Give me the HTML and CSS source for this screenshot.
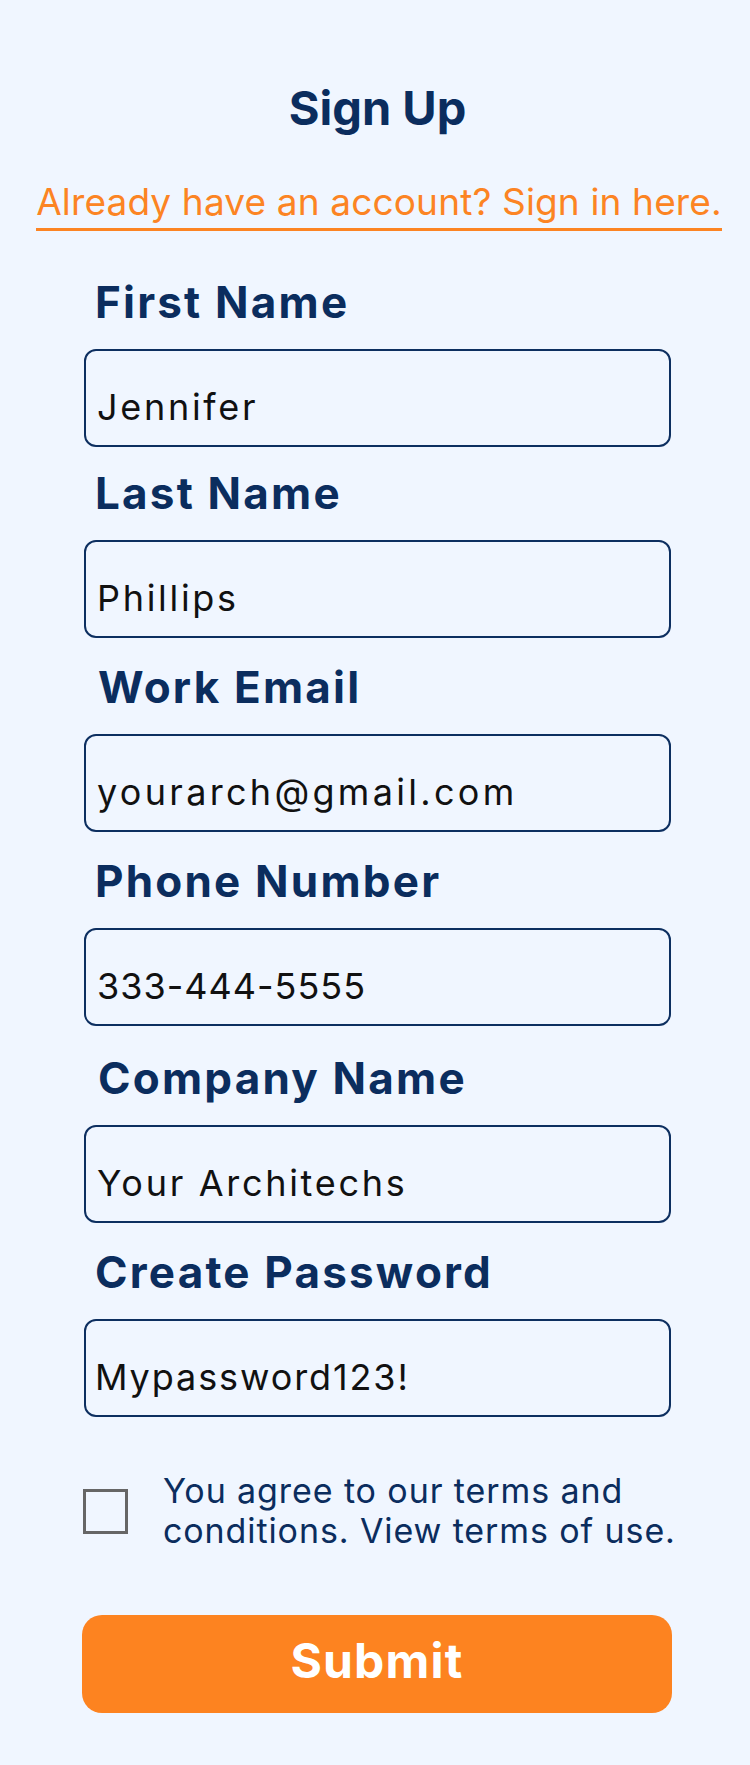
FILE: index.html
```html
<!DOCTYPE html>
<html lang="en">
<head>
<meta charset="utf-8">
<title>Sign Up</title>
<link rel="stylesheet" href="styles.css">
</head>
<body>
<main class="page">
  <h1 class="title">Sign Up</h1>
  <div class="signin-wrap">
    <a class="signin" href="#">Already have an account? Sign in here.</a>
  </div>
  <form class="form">
    <div class="field">
      <label class="label" for="first">First Name</label>
      <input class="input" id="first" type="text" value="Jennifer">
    </div>
    <div class="field field-up">
      <label class="label" for="last">Last Name</label>
      <input class="input" id="last" type="text" value="Phillips">
    </div>
    <div class="field">
      <label class="label label-shift" for="email">Work Email</label>
      <input class="input input-wide" id="email" type="text" value="yourarch@gmail.com">
    </div>
    <div class="field">
      <label class="label" for="phone">Phone Number</label>
      <input class="input input-digits" id="phone" type="text" value="333-444-5555">
    </div>
    <div class="field field-down">
      <label class="label label-shift" for="company">Company Name</label>
      <input class="input" id="company" type="text" value="Your Architechs">
    </div>
    <div class="field">
      <label class="label" for="password">Create Password</label>
      <input class="input input-narrow" id="password" type="text" value="Mypassword123!">
    </div>
    <label class="terms">
      <span class="checkbox"></span>
      <span class="terms-text">You agree to our terms and conditions. View terms of use.</span>
    </label>
    <button class="submit" type="button">Submit</button>
  </form>
</main>
</body>
</html>
```
FILE: styles.css
```css
* { box-sizing: border-box; }

html, body {
  margin: 0;
  background: #f0f6ff;
}

body {
  font-family: "Inter", "Liberation Sans", sans-serif;
  color: #0b2d5e;
}

.page {
  padding: 80px 0 52px;
  display: flex;
  flex-direction: column;
}

.title {
  margin: 0;
  font-size: 47px;
  line-height: 56px;
  font-weight: 700;
  text-align: center;
  color: #0b2d5e;
  padding-left: 5px;
}

.signin-wrap {
  margin-top: 44px;
  text-align: center;
  padding-left: 8px;
}

.signin {
  display: inline-block;
  font-size: 37px;
  line-height: 44px;
  font-weight: 400;
  letter-spacing: 0.15px;
  color: #fc8423;
  text-decoration: none;
  padding-bottom: 4px;
  border-bottom: 3px solid #fc8423;
}

.form {
  margin: 46px 79px 0 84px;
  display: flex;
  flex-direction: column;
  gap: 24px;
}

.field {
  display: flex;
  flex-direction: column;
  gap: 22px;
}

.field-up { margin-top: -3px; }
.field-down { margin-top: 3px; }

.label {
  display: block;
  padding-left: 11px;
  font-size: 44px;
  line-height: 50px;
  font-weight: 700;
  letter-spacing: 2.2px;
  color: #0b2d5e;
}

.label-shift { padding-left: 14px; }

.input {
  display: block;
  width: 100%;
  height: 98px;
  margin: 0;
  padding: 36px 10px 18px 11px;
  border: 2px solid #0d2f60;
  border-radius: 12px;
  background: transparent;
  font-family: "Inter", "Liberation Sans", sans-serif;
  font-size: 36px;
  line-height: 40px;
  font-weight: 400;
  letter-spacing: 2.7px;
  color: #111;
  outline: none;
}

.input-wide { letter-spacing: 3.3px; }
.input-digits { letter-spacing: 1px; }
.input-narrow { letter-spacing: 1.9px; padding-left: 9px; }

.terms {
  margin-top: 30px;
  margin-right: -30px;
  display: flex;
  align-items: center;
  gap: 35px;
}

.checkbox {
  flex: none;
  width: 45px;
  height: 45px;
  margin-left: -1px;
  border: 3px solid #666;
  background: transparent;
}

.terms-text {
  font-size: 34px;
  line-height: 40px;
  letter-spacing: 0.9px;
  color: #0b2d5e;
}

.submit {
  margin: 40px -1px 0 -2px;
  height: 98px;
  padding: 0 0 6px;
  border: none;
  border-radius: 20px;
  background: #fd8320;
  color: #fff;
  font-family: "Inter", "Liberation Sans", sans-serif;
  font-size: 48px;
  line-height: 48px;
  font-weight: 700;
  letter-spacing: 1.2px;
}
```
